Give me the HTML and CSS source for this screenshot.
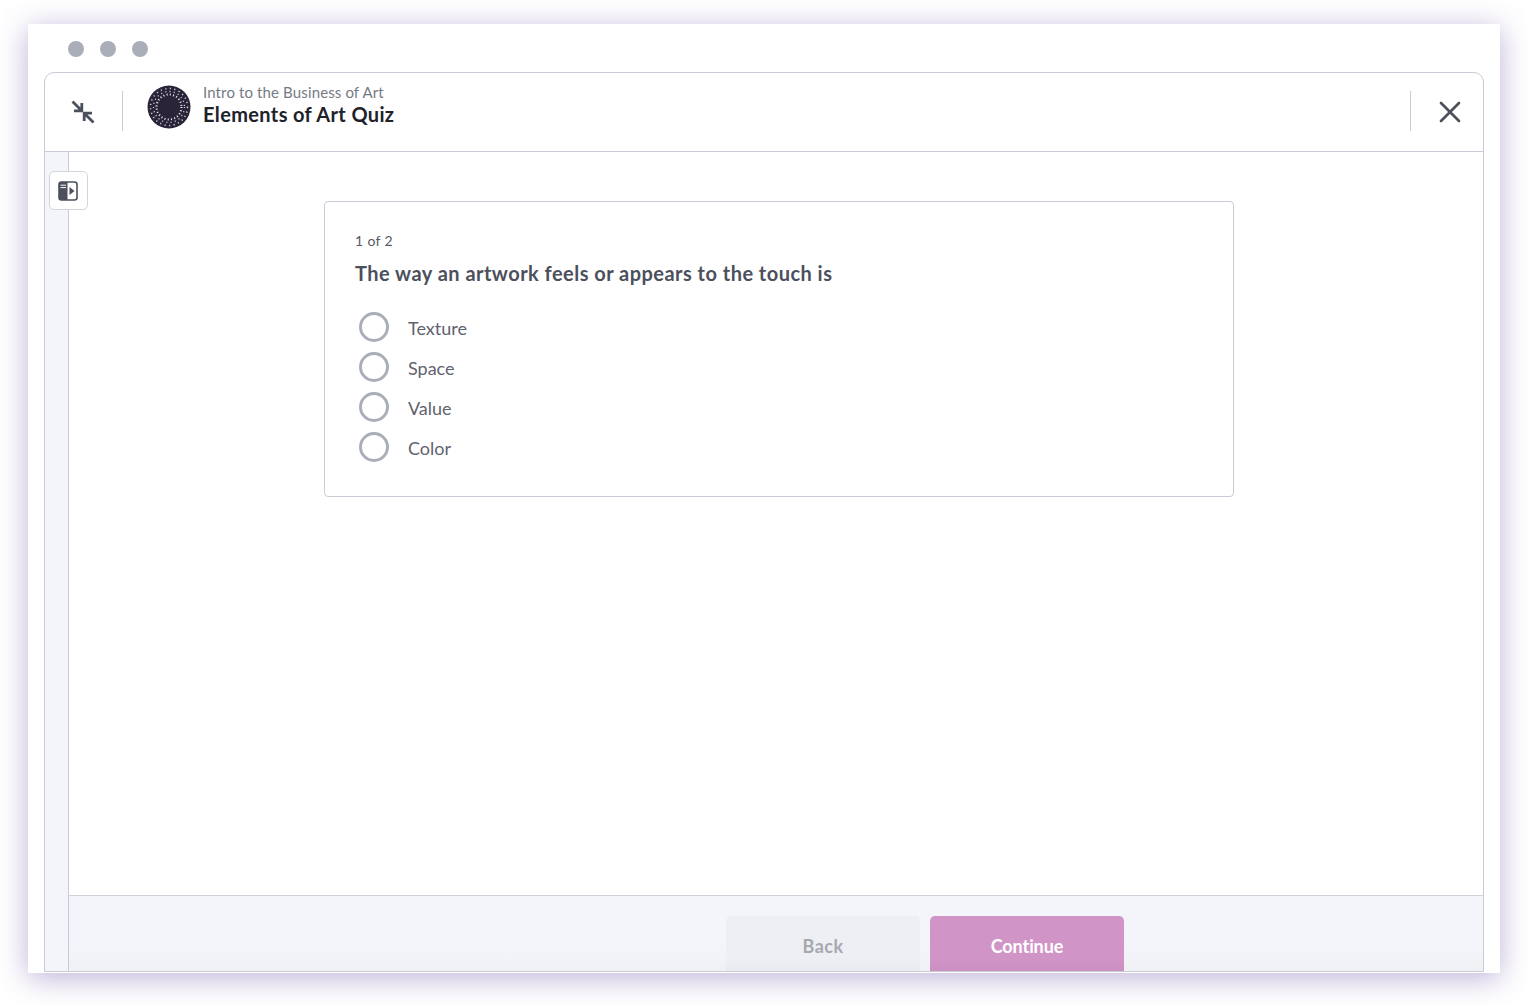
FILE: index.html
```html
<!DOCTYPE html>
<html lang="en">
<head>
    <meta charset="UTF-8">
    <title>Elements of Art Quiz</title>
    <link rel="stylesheet" href="styles.css">
</head>
<body>
<div class="window">
    <div class="dots">
        <span class="dot"></span>
        <span class="dot"></span>
        <span class="dot"></span>
    </div>
    <div class="frame">
        <div class="header">
            <div class="collapse-cell">
                <svg width="24" height="24" viewBox="0 0 24 24" fill="none" stroke="#4b505c" stroke-width="2.8">
                    <path d="M1.5 1.5 L10.5 10.5 M10.8 3 V10.8 H3"/>
                    <path d="M22.5 22.5 L13.5 13.5 M13.2 21 V13.2 H21"/>
                </svg>
            </div>
            <svg class="logo" width="44" height="44" viewBox="0 0 44 44">
                <circle cx="22" cy="22" r="21.5" fill="#2a2438"/>
                <circle cx="22" cy="22" r="18.5" fill="none" stroke="#cfcbd8" stroke-width="1.5" stroke-dasharray="1.2 3.4"/>
                <circle cx="22" cy="22" r="15.5" fill="none" stroke="#cfcbd8" stroke-width="1.3" stroke-dasharray="1.1 3.2"/>
                <circle cx="22" cy="22" r="12.5" fill="none" stroke="#f2f0f5" stroke-width="2" stroke-dasharray="1 2.3"/>
            </svg>
            <div class="titles">
                <div class="course">Intro to the Business of Art</div>
                <div class="quiz-name">Elements of Art Quiz</div>
            </div>
            <div class="close-cell">
                <svg width="22" height="22" viewBox="0 0 22 22" fill="none" stroke="#4b505c" stroke-width="2.7" stroke-linecap="round">
                    <path d="M2 2 L20 20 M20 2 L2 20"/>
                </svg>
            </div>
        </div>
        <div class="content">
            <div class="sidebar"></div>
            <button class="sidebar-toggle">
                <svg width="20" height="20" viewBox="0 0 20 20">
                    <rect x="1" y="1" width="18" height="18" rx="2.5" fill="none" stroke="#4b505c" stroke-width="1.6"/>
                    <path d="M3 1 H9.5 V19 H3 A2 2 0 0 1 1 17 V3 A2 2 0 0 1 3 1 Z" fill="#4b505c"/>
                    <path d="M2.5 4.2 H8 M2.5 6.6 H8" stroke="#fff" stroke-width="1"/>
                    <path d="M11.5 6 L16.5 10 L11.5 14 Z" fill="#4b505c"/>
                </svg>
            </button>
            <div class="main">
                <div class="scroll">
                    <div class="card">
                        <div class="count">1 of 2</div>
                        <h2 class="question">The way an artwork feels or appears to the touch is</h2>
                        <div class="options">
                            <div class="option"><span class="radio"></span><span class="label">Texture</span></div>
                            <div class="option"><span class="radio"></span><span class="label">Space</span></div>
                            <div class="option"><span class="radio"></span><span class="label">Value</span></div>
                            <div class="option"><span class="radio"></span><span class="label">Color</span></div>
                        </div>
                    </div>
                </div>
                <div class="footer">
                    <button class="btn btn-back">Back</button>
                    <button class="btn btn-continue">Continue</button>
                </div>
            </div>
        </div>
    </div>
</div>
</body>
</html>
```

FILE: styles.css
```css
html, body {
    height: 100%;
}
body {
    margin: 0;
    padding: 24px 28px 0;
    box-sizing: border-box;
    background-color: #fff;
    font-family: Lato, "Noto Sans", sans-serif;
    font-variant-ligatures: none;
    overflow: hidden;
}
.window {
    height: 949px;
    background-color: #fff;
    box-shadow: 0 5px 28px rgba(100, 70, 160, 0.42);
    padding: 0 16px;
    display: flex;
    flex-direction: column;
}
.dots {
    display: flex;
    gap: 16px;
    padding: 17px 0 15px 24px;
}
.dot {
    width: 16px;
    height: 16px;
    border-radius: 50%;
    background-color: #a9aeb9;
}
.frame {
    height: 900px;
    box-sizing: border-box;
    border: 1px solid #c9ccd6;
    border-radius: 10px 10px 0 0;
    display: flex;
    flex-direction: column;
    overflow: hidden;
}
.header {
    height: 79px;
    flex-shrink: 0;
    box-sizing: border-box;
    border-bottom: 1px solid #c9ccd6;
    display: flex;
    align-items: center;
}
.collapse-cell {
    width: 78px;
    height: 40px;
    margin-top: -2px;
    box-sizing: border-box;
    border-right: 1px solid #c9ccd6;
    display: flex;
    align-items: center;
    padding: 2px 0 0 26px;
    flex-shrink: 0;
}
.logo {
    margin-left: 24px;
    margin-right: 12px;
    margin-top: -10px;
    flex-shrink: 0;
}
.titles {
    flex: 1;
    margin-top: -15px;
}
.course {
    font-size: 15px;
    line-height: 20px;
    color: #767a85;
    letter-spacing: 0.13px;
}
.quiz-name {
    font-size: 20px;
    line-height: 25px;
    font-weight: 700;
    color: #20222a;
    letter-spacing: 0.36px;
}
.close-cell {
    width: 73px;
    height: 40px;
    margin-top: -2px;
    box-sizing: border-box;
    border-left: 1px solid #c9ccd6;
    display: flex;
    align-items: center;
    padding: 2px 0 0 28px;
    flex-shrink: 0;
}
.content {
    flex: 1;
    display: flex;
    position: relative;
    min-height: 0;
}
.sidebar {
    width: 23px;
    flex-shrink: 0;
    background-color: #f4f5fa;
    border-right: 1px solid #c9ccd6;
}
.sidebar-toggle {
    position: absolute;
    left: 4px;
    top: 19px;
    width: 39px;
    height: 39px;
    padding: 0 1px 0 0;
    display: flex;
    align-items: center;
    justify-content: center;
    background-color: #fff;
    border: 1px solid #d3d5dd;
    border-radius: 5px;
}
.main {
    flex: 1;
    display: flex;
    flex-direction: column;
    min-width: 0;
}
.scroll {
    flex: 1;
    padding: 49px 0 0 255px;
}
.card {
    width: 910px;
    height: 296px;
    box-sizing: border-box;
    padding: 29px 30px 0;
    border: 1px solid #c9ccd6;
    border-radius: 4px;
}
.count {
    font-size: 14px;
    line-height: 20px;
    color: #565a66;
    letter-spacing: 0.35px;
}
.question {
    margin: 9px 0 0;
    font-size: 20px;
    line-height: 26px;
    font-weight: 700;
    color: #4b505c;
    letter-spacing: 0.47px;
}
.options {
    margin-top: 26px;
    padding-left: 4px;
    display: flex;
    flex-direction: column;
    gap: 10px;
}
.option {
    display: flex;
    align-items: center;
    gap: 19px;
    height: 30px;
    font-size: 18px;
    color: #5f636e;
}
.label {
    padding-top: 1px;
}
.radio {
    width: 30px;
    height: 30px;
    box-sizing: border-box;
    border: 3px solid #a9aeb9;
    border-radius: 50%;
}
.footer {
    height: 76px;
    flex-shrink: 0;
    box-sizing: border-box;
    background: linear-gradient(#f4f5fa 65%, #f0f1f5);
    border-top: 1px solid #d0d2da;
    padding: 20px 0 0 657px;
    display: flex;
    gap: 10px;
}
.btn {
    width: 194px;
    height: 60px;
    flex-shrink: 0;
    border: none;
    border-radius: 5px;
    padding: 0 0 1px;
    font-family: inherit;
    font-size: 18px;
    font-weight: 700;
}
.btn-back {
    background: linear-gradient(#eeeff4 70%, #e9eaef);
    color: #a6a8ae;
    letter-spacing: 0.5px;
}
.btn-continue {
    background: linear-gradient(#d094c7 70%, #ca8dc0);
    color: #fff;
    letter-spacing: -0.1px;
}
```
